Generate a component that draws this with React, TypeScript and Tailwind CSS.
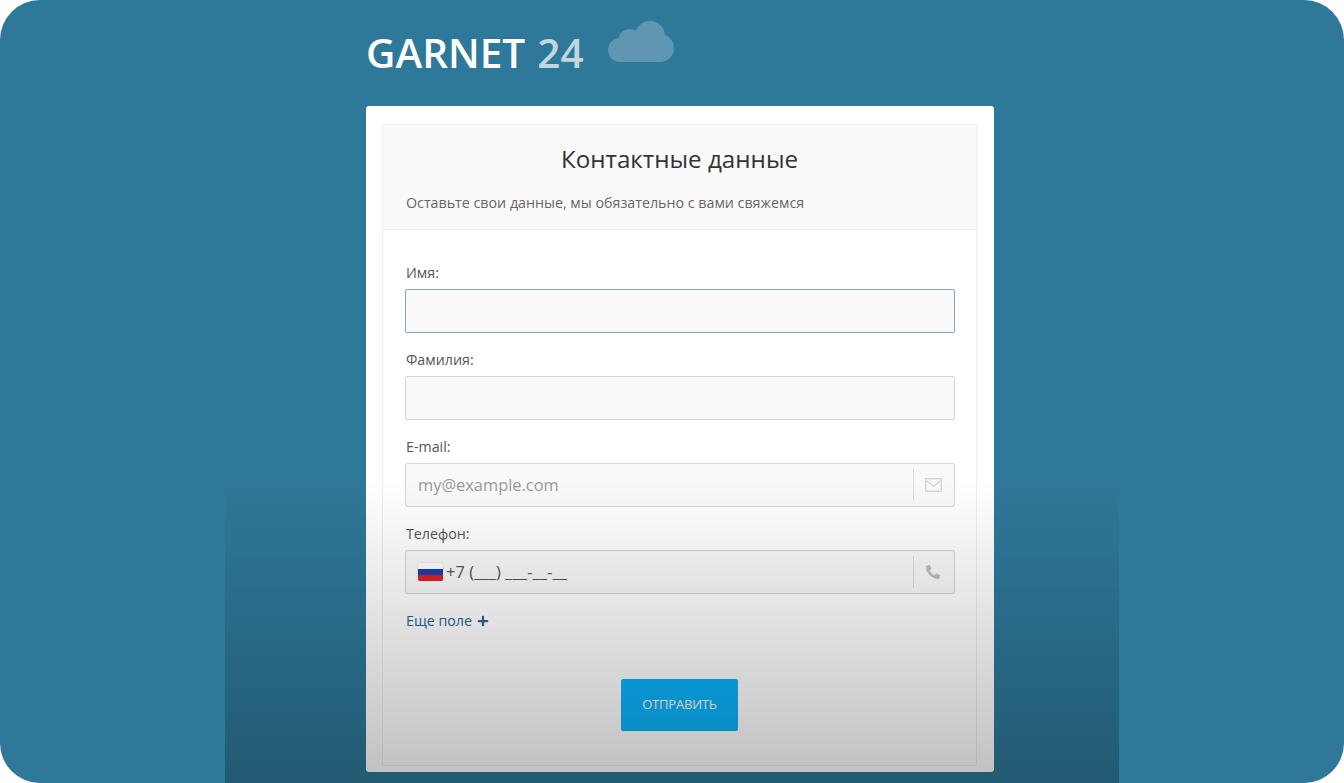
import { FaPlus, FaPhoneAlt } from 'react-icons/fa';

const font = { fontFamily: '"Open Sans", "Noto Sans", sans-serif' };

function Field({ label, children }: { label: string; children: React.ReactNode }) {
  return (
    <div className="flex flex-col">
      <label className="h-[43px] pt-[17px] pl-px text-[14.25px] leading-[20px] text-[#555]">{label}</label>
      {children}
    </div>
  );
}

function AddonInput({ icon, children }: { icon: React.ReactNode; children: React.ReactNode }) {
  return (
    <div className="flex h-[44px] items-center rounded-[2px] border border-[#d5d5d5] bg-[#f9f9f9] pl-3">
      <div className="flex flex-1 items-center">{children}</div>
      <div className="flex h-[32px] w-[41px] items-center justify-center border-l border-[#dcdcdc] pr-[2px]">
        {icon}
      </div>
    </div>
  );
}

function Cloud() {
  return (
    <svg className="-mt-[5px] ml-[24px]" width="66" height="41" viewBox="0 0 66 41" fill="#5f97b3">
      <circle cx="12" cy="29" r="12" />
      <circle cx="22" cy="20" r="12" />
      <circle cx="42" cy="15" r="15" />
      <circle cx="52" cy="27" r="14" />
      <rect x="12" y="20" width="40" height="21" />
    </svg>
  );
}

function MailIcon() {
  return (
    <svg width="17" height="14" viewBox="0 0 17 14" fill="none" stroke="#d2d2d2" strokeWidth="1.3">
      <rect x="0.7" y="0.7" width="15.6" height="12.6" />
      <path d="M0.9 2.5 L8.5 8.3 L16.1 2.5" />
    </svg>
  );
}

export default function App() {
  return (
    <div className="h-[783px] w-full overflow-hidden bg-white" style={font}>
      <div className="relative h-full overflow-hidden rounded-[40px] bg-[#2e7899] pl-[366px]">
        <div className="flex h-[106px] items-start">
          <div className="mt-[26px] flex items-start">
            <span className="text-[40.5px] leading-[54px] font-semibold text-white">GARNET</span>
            <span className="ml-[12px] text-[40.5px] leading-[54px] font-semibold text-[#c3d5df]">24</span>
            <Cloud />
          </div>
        </div>

        <div className="h-[666px] w-[628px] rounded-[3px] bg-white pt-[18px] pr-[17px] pb-[6px] pl-[16px]">
          <div className="h-full rounded-[2px] border border-[#eeeeee]">
            <div className="flex h-[105px] flex-col border-b border-[#eeeeee] bg-[#fafafa] pr-[23px] pl-[23px]">
              <h1 className="pt-[15px] text-center text-[24.2px] leading-[38px] font-medium text-[#333]">
                Контактные данные
              </h1>
              <p className="pt-[15px] text-[14.25px] leading-[20px] text-[#666]">
                Оставьте свои данные, мы обязательно с вами свяжемся
              </p>
            </div>

            <div className="flex flex-col pt-[16px] pr-[21px] pl-[22px]">
              <Field label="Имя:">
                <div className="h-[44px] rounded-[2px] border border-[#85a8c8] bg-[#f9f9f9]" />
              </Field>
              <Field label="Фамилия:">
                <div className="h-[44px] rounded-[2px] border border-[#d5d5d5] bg-[#f9f9f9]" />
              </Field>
              <Field label="E-mail:">
                <AddonInput icon={<MailIcon />}>
                  <span className="text-[16.4px] text-[#999]">my@example.com</span>
                </AddonInput>
              </Field>
              <Field label="Телефон:">
                <AddonInput icon={<FaPhoneAlt className="text-[#bdbdbd]" size={14} />}>
                  <span className="mr-[3px] flex h-[18px] w-[25px] flex-col overflow-hidden rounded-[2px] shadow-[0_0_1px_rgba(0,0,0,0.4)]">
                    <span className="flex-1 bg-[#ffffff]" />
                    <span className="flex-1 bg-[#1a3fae]" />
                    <span className="flex-1 bg-[#dd2027]" />
                  </span>
                  <span className="text-[16.4px] tracking-[0.1px] text-[#555]">+7 (___) ___-__-__</span>
                </AddonInput>
              </Field>

              <a className="mt-[17px] flex items-center pl-px text-[14.25px] leading-[20px] text-[#2a6496]">
                Еще поле
                <FaPlus className="ml-[5px]" size={12} />
              </a>

              <div className="mt-[48px] flex justify-center pr-px">
                <button className="h-[52px] w-[117px] rounded-[2px] bg-[#0cb2fa] text-[13px] font-medium tracking-[-0.2px] text-white">
                  ОТПРАВИТЬ
                </button>
              </div>
            </div>
          </div>
        </div>

        {/* dark fade laid over the lower part of the page */}
        <div className="pointer-events-none absolute top-[480px] bottom-0 left-[225px] w-[894px] bg-gradient-to-b from-transparent to-black/25" />
      </div>
    </div>
  );
}
